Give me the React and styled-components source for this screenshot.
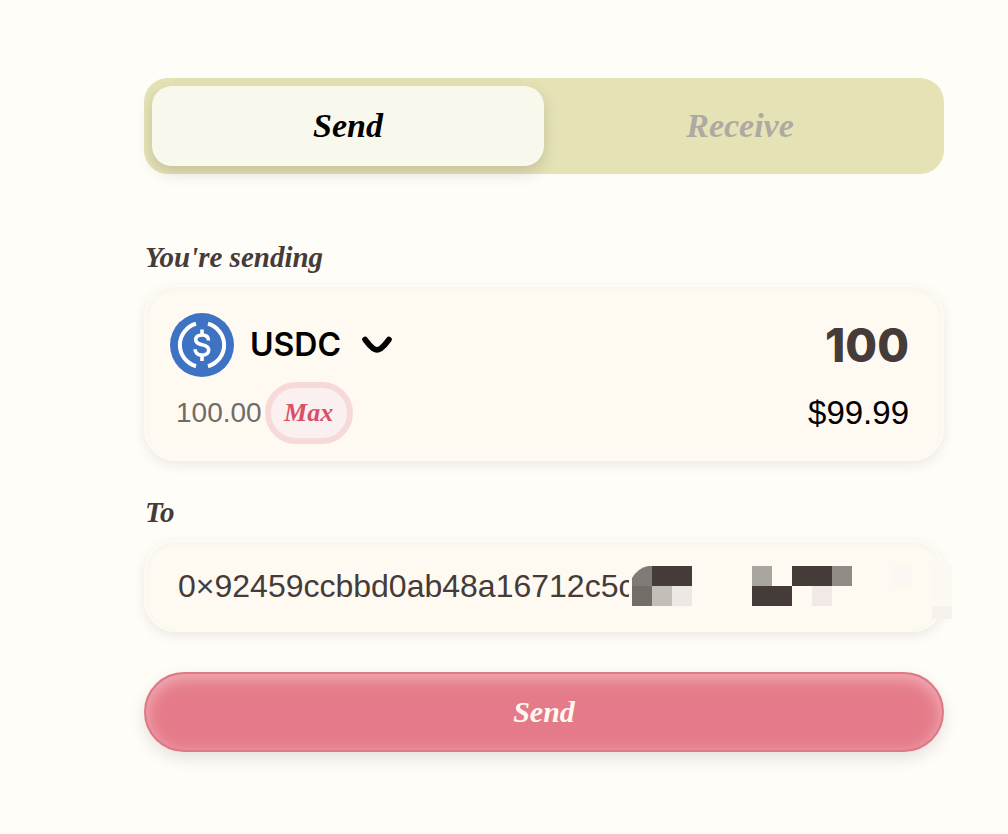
import React, { useState } from "react";
import styled, { createGlobalStyle } from "styled-components";

const GlobalStyle = createGlobalStyle`
* {
	box-sizing: border-box;
}
body {
	margin: 0;
	background: #fffdf8;
	font-family: Inter, "Liberation Sans", sans-serif;
}
button, input, select {
	margin: 0;
	padding: 0;
	border: 0;
	background: none;
	font-family: inherit;
	outline: none;
}
`;

const serif = `"Liberation Serif", serif`;

const Page = styled.main`
padding: 78px 64px 82px 144px;
`;

const Tabs = styled.div`
display: flex;
height: 96px;
padding: 8px;
margin-bottom: 67px;
border-radius: 24px;
background: #e5e3b6;
`;

const Tab = styled.button`
flex: 1;
border-radius: 20px;
font: italic 700 34px ${serif};
cursor: pointer;
color: ${({ $active }) => ($active ? "#000" : "#aea9a2")};
background: ${({ $active }) => ($active ? "#f8f8ec" : "transparent")};
box-shadow: ${({ $active }) => ($active ? "0 6px 16px rgba(69, 59, 56, 0.2)" : "none")};
`;

const FieldLabel = styled.label`
display: block;
margin-bottom: 12px;
padding-left: 1px;
font: italic 700 29px/32px ${serif};
color: #453b38;
`;

const Card = styled.section`
position: relative;
margin-bottom: ${({ $gap }) => $gap}px;
border: 2px solid #fefaf4;
border-radius: 32px;
background: #fef9f1;
box-shadow: 0 4px 12px rgba(69, 59, 56, 0.1), inset 0 2px 6px rgba(69, 59, 56, 0.03);
`;

const AmountCard = styled(Card)`
display: flex;
flex-direction: column;
gap: 5px;
padding: 26px 33px 15px 24px;
`;

const Row = styled.div`
display: flex;
align-items: center;
justify-content: space-between;
height: ${({ $height }) => $height}px;
`;

const Token = styled.div`
display: flex;
align-items: center;
flex: none;
`;

const TokenSelect = styled.select`
appearance: none;
width: 112px;
margin-left: 16px;
font-size: 32px;
font-weight: 600;
line-height: 40px;
color: #000;
cursor: pointer;
`;

const AmountInput = styled.input`
flex: 1;
min-width: 0;
height: 60px;
text-align: right;
font-size: 46px;
font-weight: 800;
color: #453b38;
`;

const Balance = styled.span`
padding-left: 6px;
margin-right: 3px;
font: 28px "Liberation Sans", sans-serif;
color: #706b66;
`;

const MaxButton = styled.button`
width: 88px;
height: 62px;
border: 6px solid #f7d9d9;
border-radius: 31px;
background: #fbf0f0;
font: italic 700 26px ${serif};
color: #d84f68;
cursor: pointer;
`;

const Fiat = styled.span`
font: 33px "Liberation Sans", sans-serif;
color: #000;
`;

const AddressInput = styled.input`
display: block;
width: 100%;
height: 88px;
padding: 0 313px 0 32px;
font: 32px "Liberation Sans", sans-serif;
color: #453b38;
`;

const Mosaic = styled.svg`
position: absolute;
top: 22px;
right: -10px;
pointer-events: none;
`;

const SendButton = styled.button`
display: block;
width: 100%;
height: 80px;
border: 2px solid #df7889;
border-radius: 40px;
background: #e57b8a;
box-shadow: 0 6px 16px rgba(69, 59, 56, 0.14), inset 0 4px 16px rgba(255, 240, 235, 0.5);
font: italic 700 30px ${serif};
color: #fff9f1;
cursor: pointer;
`;

const UsdcLogo = () => (
	<svg width="64" height="64" viewBox="0 0 64 64" fill="none" aria-hidden="true">
		<circle cx="32" cy="32" r="32" fill="#3e73c4" />
		<g stroke="#fff">
			<path d="M26 10.800a22 22 0 0 0 0 42.400M38 10.800a22 22 0 0 1 0 42.400" strokeWidth="4" />
			<path d="M38.500 27.500c0-3.600-2.500-5.500-6.500-5.500s-6.300 1.900-6.300 4.800c0 3.200 2.300 4.100 6.300 4.900 4.400.9 6.700 2 6.700 5.200 0 3.300-2.800 5.200-6.700 5.200-4.200 0-6.900-2.100-6.900-5.800M32 16.500V22M32 42v6" strokeWidth="3.600" />
		</g>
	</svg>
);

const Chevron = () => (
	<svg width="30" height="18" viewBox="0 0 30 18" fill="none" aria-hidden="true">
		<path d="M3 3.500C5.500 7 8 10 11.500 12.700Q15 15 18.500 12.700C22 10 24.500 7 27 3.500" stroke="#000" strokeWidth="5.600" strokeLinecap="round" />
	</svg>
);

// blocks hiding the tail of the address: x, y, width, height, fill
const blocks = [
	[20, 2, 40, 20, "#453b38"],
	[0, 22, 20, 20, "#736d67"],
	[20, 22, 20, 20, "#c4beb8"],
	[40, 22, 20, 20, "#eee8e4"],
	[120, 2, 20, 20, "#a9a59f"],
	[160, 2, 40, 20, "#453b38"],
	[200, 2, 20, 20, "#908b85"],
	[120, 22, 40, 20, "#453b38"],
	[180, 22, 20, 20, "#f1e9e5"],
	[260, 2, 20, 20, "#fcf7f2"],
	[300, 0, 20, 42, "#fcf8f2"],
	[300, 42, 20, 13, "#f6f3ed"],
];

function App() {
	const [tab, setTab] = useState("Send");
	const [amount, setAmount] = useState("100");
	const [address, setAddress] = useState("0×92459ccbbd0ab48a16712c5c");

	return (
		<>
			<GlobalStyle />
			<Page>
				<Tabs>
					{["Send", "Receive"].map((name) => (
						<Tab key={name} type="button" $active={tab === name} onClick={() => setTab(name)}>
							{name}
						</Tab>
					))}
				</Tabs>

				<FieldLabel htmlFor="amount">You're sending</FieldLabel>
				<AmountCard $gap={35}>
					<Row $height={64}>
						<Token>
							<UsdcLogo />
							<TokenSelect aria-label="Token">
								<option>USDC</option>
							</TokenSelect>
							<Chevron />
						</Token>
						<AmountInput id="amount" value={amount} onChange={(e) => setAmount(e.target.value)} />
					</Row>
					<Row $height={62}>
						<Token>
							<Balance>100.00</Balance>
							<MaxButton type="button" onClick={() => setAmount("100")}>Max</MaxButton>
						</Token>
						<Fiat>$99.99</Fiat>
					</Row>
				</AmountCard>

				<FieldLabel htmlFor="address">To</FieldLabel>
				<Card $gap={40}>
					<AddressInput id="address" value={address} onChange={(e) => setAddress(e.target.value)} />
					<Mosaic width="320" height="55" viewBox="0 0 320 55" aria-hidden="true">
						<path d="M0 22V14Q6 4 16 2H20V22Z" fill="#7f7b77" />
						{blocks.map(([x, y, width, height, fill]) => (
							<rect key={`${x}-${y}`} x={x} y={y} width={width} height={height} fill={fill} />
						))}
					</Mosaic>
				</Card>

				<SendButton type="button">Send</SendButton>
			</Page>
		</>
	);
}

export default App;
